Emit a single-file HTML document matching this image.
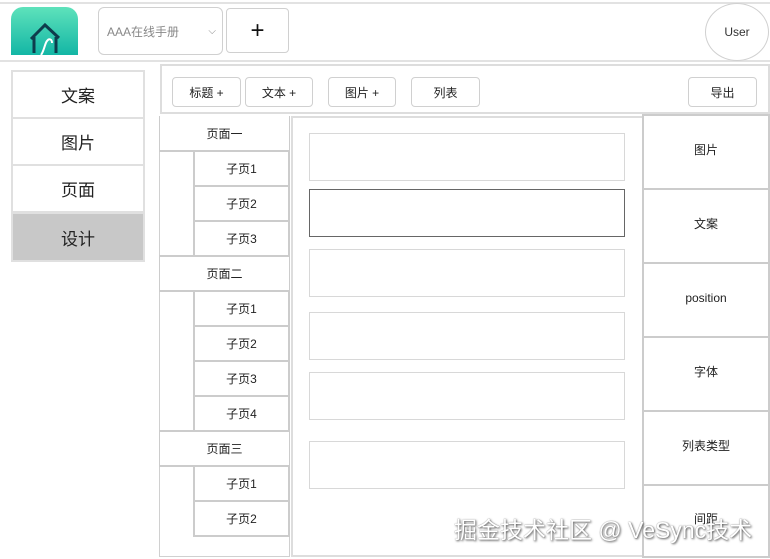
<!DOCTYPE html>
<html><head><meta charset="utf-8"><style>
*{box-sizing:border-box;margin:0;padding:0}
body{width:770px;height:559px;background:#fff;position:relative;overflow:hidden;font-family:"Liberation Sans","Noto Sans CJK SC",sans-serif;color:#222}
.a{position:absolute}
.b{position:absolute;border:1px solid #d0d0d0;display:flex;align-items:center;justify-content:center;background:#fff}
.btn{border-radius:4px;font-size:12px}
.m{font-size:17px;border:2px solid #e0e0e0}
.t{font-size:12px;border:2px solid #ccc}
.r{font-size:12px;border:2px solid #ccc}
.box{position:absolute;left:309px;width:316px;height:48px;border:1.5px solid #d8d8d8}
</style></head><body>
<div class="a" style="left:0;top:2px;width:770px;height:60px;border-top:2px solid #e2e2e2;border-bottom:2px solid #e2e2e2"></div>
<div class="a" style="left:11px;top:7px;width:67px;height:48px;border-radius:12px 12px 0 0;background:linear-gradient(#5ee2bb,#13b6a5);overflow:hidden">
<svg width="67" height="48" viewBox="0 0 67 48"><path d="M20 32 L34 18 L48 31 M23 30 V46 M45 30 V46" stroke="#0e3c4c" stroke-width="3" fill="none"/><path d="M30 48 C33 44,34 36,36 34 C38 31,41 32,41 36" stroke="#fff" stroke-width="2" fill="none"/></svg></div>
<div class="b" style="left:98px;top:7px;width:125px;height:48px;border-radius:6px;justify-content:flex-start;padding-left:8px;font-size:12px;color:#888">AAA在线手册<span style="position:absolute;right:6px;font-size:10px">⌵</span></div>
<div class="b" style="left:226px;top:8px;width:63px;height:45px;border-radius:4px;font-size:24px;color:#111">+</div>
<div class="b" style="left:705px;top:3px;width:64px;height:58px;border-radius:50%;font-size:12px;color:#333">User</div>

<div class="b m" style="left:11px;top:70px;width:134px;height:49px">文案</div>
<div class="b m" style="left:11px;top:117px;width:134px;height:49px">图片</div>
<div class="b m" style="left:11px;top:164px;width:134px;height:49px">页面</div>
<div class="b m" style="left:11px;top:212px;width:134px;height:50px;background:#c8c8c8">设计</div>

<div class="a" style="left:160px;top:64px;width:610px;height:50px;border:2px solid #ddd"></div>
<div class="b btn" style="left:172px;top:77px;width:69px;height:30px">标题 +</div>
<div class="b btn" style="left:245px;top:77px;width:68px;height:30px">文本 +</div>
<div class="b btn" style="left:328px;top:77px;width:68px;height:30px">图片 +</div>
<div class="b btn" style="left:411px;top:77px;width:69px;height:30px">列表</div>
<div class="b btn" style="left:688px;top:77px;width:69px;height:30px">导出</div>

<div class="a" style="left:159px;top:116px;width:131px;height:441px;border:1px solid #d0d0d0"></div>
<div class="b t" style="left:159px;top:116px;width:131px;height:36px;border-width:0 1px 2px 1px">页面一</div>
<div class="b t" style="left:193px;top:150px;width:97px;height:37px">子页1</div>
<div class="b t" style="left:193px;top:185px;width:97px;height:37px">子页2</div>
<div class="b t" style="left:193px;top:220px;width:97px;height:37px">子页3</div>
<div class="b t" style="left:159px;top:255px;width:131px;height:37px;border-width:2px 1px 2px 1px">页面二</div>
<div class="b t" style="left:193px;top:290px;width:97px;height:37px">子页1</div>
<div class="b t" style="left:193px;top:325px;width:97px;height:37px">子页2</div>
<div class="b t" style="left:193px;top:360px;width:97px;height:37px">子页3</div>
<div class="b t" style="left:193px;top:395px;width:97px;height:37px">子页4</div>
<div class="b t" style="left:159px;top:430px;width:131px;height:37px;border-width:2px 1px 2px 1px">页面三</div>
<div class="b t" style="left:193px;top:465px;width:97px;height:37px">子页1</div>
<div class="b t" style="left:193px;top:500px;width:97px;height:37px">子页2</div>

<div class="a" style="left:291px;top:116px;width:353px;height:441px;border:2px solid #ddd"></div>
<div class="box" style="top:133px"></div>
<div class="box" style="top:189px;border-color:#666"></div>
<div class="box" style="top:249px"></div>
<div class="box" style="top:312px"></div>
<div class="box" style="top:372px"></div>
<div class="box" style="top:441px"></div>

<div class="b r" style="left:642px;top:114px;width:128px;height:76px;padding-bottom:5px">图片</div>
<div class="b r" style="left:642px;top:188px;width:128px;height:76px;padding-bottom:5px">文案</div>
<div class="b r" style="left:642px;top:262px;width:128px;height:76px;padding-bottom:5px">position</div>
<div class="b r" style="left:642px;top:336px;width:128px;height:76px;padding-bottom:5px">字体</div>
<div class="b r" style="left:642px;top:410px;width:128px;height:76px;padding-bottom:5px">列表类型</div>
<div class="b r" style="left:642px;top:484px;width:128px;height:74px;padding-bottom:5px">间距</div>

<div class="a" style="left:454px;top:511px;font-size:23px;color:#fff;text-shadow:1px 1px 2px #555,0 0 1px #777;white-space:nowrap">掘金技术社区 @ VeSync技术</div>
</body></html>
